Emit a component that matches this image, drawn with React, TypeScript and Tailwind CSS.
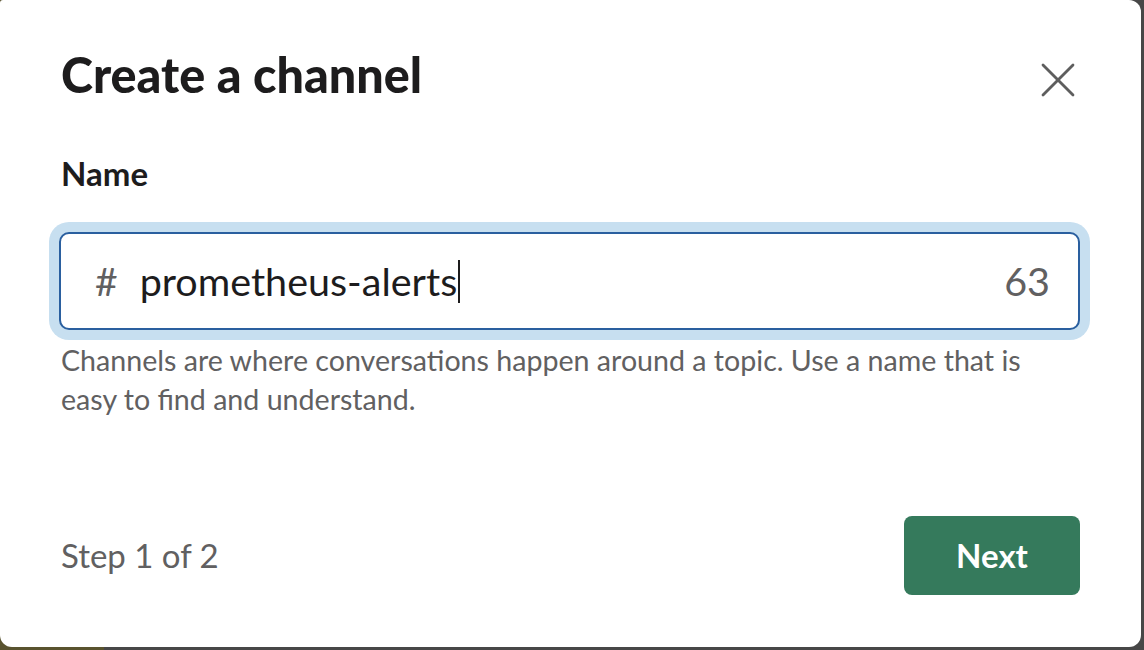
import { X } from "lucide-react";

const lato = { fontFamily: "Lato, 'Noto Sans', sans-serif" };

function ChannelNameInput() {
  return (
    <div className="mt-[29px] ml-[-12px] mr-[51px] rounded-[20px] bg-[#c7dff0] p-[10px]">
      <div className="flex h-[98px] items-center rounded-[10px] border-2 border-[#2a5f9f] bg-white pl-[34px] pr-[28px]">
        <span className="text-[39px] text-[#616061]">#</span>
        <span className="ml-[22px] text-[39.5px] text-[#1d1c1d]">prometheus-alerts</span>
        <span className="ml-[1px] h-[43px] w-[2px] bg-[#1d1c1d]" />
        <span className="ml-auto text-[39.5px] text-[#616061]">63</span>
      </div>
    </div>
  );
}

export default function App() {
  return (
    <div
      className="h-[650px] w-[1144px] overflow-hidden bg-[linear-gradient(to_right,#59532f_104px,#474747_104px)]"
      style={lato}
    >
      <div className="flex h-[647px] w-[1141px] flex-col rounded-[12px] rounded-tl-[3px] bg-white pl-[61px]">
        <div className="mt-[44px] flex items-start justify-between pr-[53px]">
          <h1 className="text-[48.5px] font-black leading-[60px] text-[#1d1c1d]">Create a channel</h1>
          <X className="mt-[6px] size-[60px] text-[#5e5e5e]" strokeWidth={1.1} />
        </div>
        <label className="mt-[43px] text-[33px] font-bold leading-[40px] text-[#1d1c1d]">Name</label>
        <ChannelNameInput />
        <p className="mt-[1px] pr-[80px] text-[28.6px] leading-[39px] text-[#616061]">
          Channels are where conversations happen around a topic. Use a name that is easy to find and understand.
        </p>
        <div className="mt-auto mb-[52px] flex items-center justify-between pr-[61px]">
          <span className="text-[33px] text-[#616061]">Step 1 of 2</span>
          <button className="h-[79px] w-[176px] rounded-[8px] bg-[#357a5c] text-[33px] font-bold text-white">
            Next
          </button>
        </div>
      </div>
    </div>
  );
}
